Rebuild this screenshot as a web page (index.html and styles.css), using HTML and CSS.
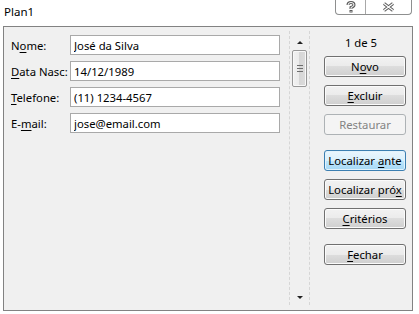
FILE: index.html
```html
<!DOCTYPE html>
<html lang="pt">
<head>
    <meta charset="UTF-8">
    <title>Plan1</title>
    <link rel="stylesheet" href="styles.css">
</head>
<body>
    <!-- Title bar -->
    <div class="titlebar">
        <span class="title">Plan1</span>
        <div class="caption-btns">
            <span class="cap-btn help">
                <svg width="10" height="12" viewBox="0 0 10 12">
                    <path d="M2 4 Q2 1.5 5 1.5 Q8 1.5 8 4 Q8 5.5 5 6.5 L5 8" fill="none" stroke="#5a5a5a" stroke-width="3"/>
                    <rect x="3.5" y="9" width="3" height="2.5" fill="#5a5a5a"/>
                    <path d="M2 4 Q2 1.5 5 1.5 Q8 1.5 8 4 Q8 5.5 5 6.5 L5 8" fill="none" stroke="#fff" stroke-width="1"/>
                    <rect x="4.5" y="10" width="1" height="0.8" fill="#fff"/>
                </svg>
            </span>
            <span class="cap-btn close">
                <svg width="13" height="10" viewBox="0 0 13 10">
                    <path d="M2 1.5 L11 8.5 M11 1.5 L2 8.5" stroke="#5a5a5a" stroke-width="3.2"/>
                    <path d="M2 1.5 L11 8.5 M11 1.5 L2 8.5" stroke="#fff" stroke-width="1.2"/>
                </svg>
            </span>
        </div>
    </div>

    <!-- Data form -->
    <div class="dialog">
        <div class="fields">
            <div class="row">
                <label>N<u>o</u>me:</label>
                <input type="text" value="José da Silva">
            </div>
            <div class="row">
                <label><u>D</u>ata Nasc:</label>
                <input type="text" value="14/12/1989">
            </div>
            <div class="row">
                <label><u>T</u>elefone:</label>
                <input type="text" value="(11) 1234-4567">
            </div>
            <div class="row">
                <label>E-<u>m</u>ail:</label>
                <input type="text" value="jose@email.com">
            </div>
        </div>

        <div class="scrollbar">
            <span class="arrow up"></span>
            <div class="thumb">
                <span class="grip"></span>
                <span class="grip"></span>
                <span class="grip"></span>
            </div>
            <span class="arrow down"></span>
        </div>

        <div class="actions">
            <div class="counter">1 de 5</div>
            <button class="btn btn-first">N<u>o</u>vo</button>
            <button class="btn"><u>E</u>xcluir</button>
            <button class="btn" disabled>Restaurar</button>
            <button class="btn focused btn-group">Localizar <u>a</u>nte</button>
            <button class="btn">Localizar pró<u>x</u></button>
            <button class="btn"><u>C</u>ritérios</button>
            <button class="btn btn-group"><u>F</u>echar</button>
        </div>
    </div>
</body>
</html>
```

FILE: styles.css
```css
body {
    margin: 0;
    padding: 0;
    background-color: #ffffff;
    font-family: "Noto Sans", "Open Sans", sans-serif;
    font-size: 11.3px;
    color: #000;
}

u {
    text-decoration: underline;
    text-underline-offset: 2px;
}

/* Title bar */
.titlebar {
    display: flex;
    align-items: flex-start;
    height: 26px;
}

.title {
    padding: 4px 0 0 4px;
    font-size: 11.5px;
    color: #000;
}

.caption-btns {
    display: flex;
    margin-left: auto;
    margin-right: 7px;
    height: 15px;
    border: 1px solid #8e8f8f;
    border-top: none;
    border-radius: 0 0 4px 4px;
    box-sizing: border-box;
    background-color: #fff;
}

.cap-btn {
    display: flex;
    align-items: center;
    justify-content: center;
    height: 14px;
}

.cap-btn.help {
    width: 29px;
    border-right: 1px solid #a8a8a8;
}

.cap-btn.close {
    width: 45px;
}

/* Dialog frame */
.dialog {
    display: flex;
    margin-left: 3px;
    width: 410px;
    height: 285px;
    box-sizing: border-box;
    border: 1px solid #828282;
    background-color: #f0f0f0;
}

.fields {
    width: 285px;
    padding: 8px 0 0 7px;
    box-sizing: border-box;
}

.row {
    display: flex;
    align-items: center;
    height: 20px;
    margin-bottom: 6px;
}

.row label {
    width: 59px;
    white-space: nowrap;
}

.row input {
    width: 210px;
    height: 20px;
    box-sizing: border-box;
    border: 1px solid #a9a9a9;
    background-color: #fff;
    padding: 0 3px;
    font-family: inherit;
    font-size: 11.3px;
    color: #000;
    outline: none;
}

/* Scrollbar */
.scrollbar {
    display: flex;
    flex-direction: column;
    align-items: center;
    width: 21px;
    margin-top: 4px;
    height: 274px;
    box-sizing: border-box;
    border-left: 1px dashed #d6d6d6;
    border-right: 1px dashed #d6d6d6;
}

.arrow {
    width: 0;
    height: 0;
    border-left: 3px solid transparent;
    border-right: 3px solid transparent;
}

.arrow.up {
    margin-top: 10px;
    border-bottom: 3px solid #222;
}

.arrow.down {
    margin-top: auto;
    margin-bottom: 6px;
    border-top: 3px solid #222;
}

.thumb {
    display: flex;
    flex-direction: column;
    align-items: center;
    justify-content: center;
    gap: 2px;
    margin-top: 6px;
    width: 15px;
    height: 37px;
    box-sizing: border-box;
    border: 1px solid #979797;
    border-radius: 2px;
    background: linear-gradient(to right, #f1f1f1, #ebebeb 50%, #d6d6d6 50%, #dcdcdc);
    box-shadow: inset 0 0 0 1px #f8f8f8;
}

.grip {
    width: 6px;
    height: 1px;
    background-color: #6e6e6e;
}

/* Button column */
.actions {
    display: flex;
    flex-direction: column;
    padding-left: 14px;
}

.counter {
    width: 82px;
    margin-top: 8px;
    padding-right: 8px;
    box-sizing: border-box;
    text-align: center;
    line-height: 16px;
}

.btn {
    width: 82px;
    height: 21px;
    margin-top: 8px;
    padding: 0;
    border: 1px solid #707070;
    border-radius: 3px;
    background: linear-gradient(#f2f2f2, #ebebeb 50%, #dddddd 50%, #cfcfcf);
    box-shadow: inset 0 0 0 1px #fbfbfb;
    font-family: inherit;
    font-size: 11.3px;
    color: #000;
    line-height: 17px;
}

.btn-first {
    margin-top: 5px;
}

.btn-group {
    margin-top: 15px;
}

.btn.focused {
    border-color: #3c7fb1;
    background: linear-gradient(#eaf6fd, #d9f0fc 50%, #bee6fd 50%, #a7d9f5);
    box-shadow: inset 0 0 0 1px #e3f3fc;
}

.btn:disabled {
    border-color: #adb2b5;
    background: #f4f4f4;
    box-shadow: none;
    color: #838383;
}
```
